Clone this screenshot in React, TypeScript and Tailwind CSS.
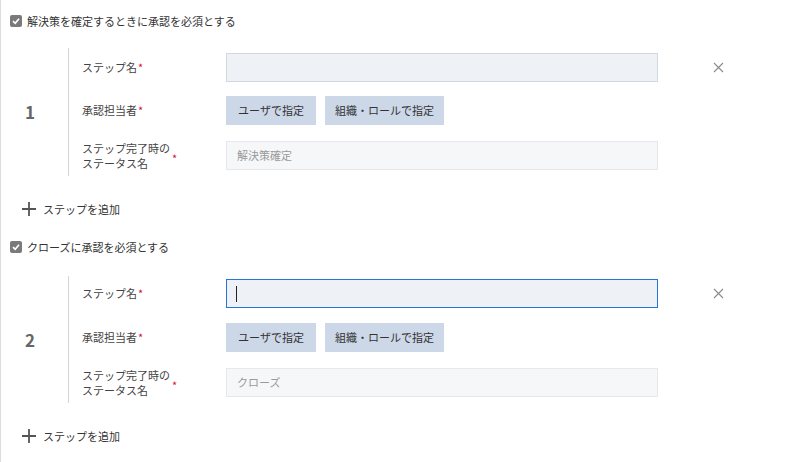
import React from "react";

interface StepProps {
  num: string;
  statusName: string;
  focused?: boolean;
  pt: string;
  gapA: string;
}

function CheckRow({ label, className }: { label: string; className: string }) {
  return (
    <div className={`flex items-center h-[16px] pl-[9px] ${className}`}>
      <span className="flex items-center justify-center w-[12px] h-[12px] rounded-[2px] bg-[#7a7a7a]">
        <svg width="10" height="10" viewBox="0 0 10 10">
          <path d="M2 5.2 L4.2 7.3 L8 2.8" stroke="#fff" strokeWidth="1.7" fill="none" />
        </svg>
      </span>
      <span className="ml-[5px] text-[11px] text-[#333]">{label}</span>
    </div>
  );
}

function AddStep({ className }: { className: string }) {
  return (
    <div className={`flex items-center h-[20px] pl-[20px] ${className}`}>
      <svg width="16" height="16" viewBox="0 0 16 16">
        <path d="M8 1 V15 M1 8 H15" stroke="#555" strokeWidth="1.8" />
      </svg>
      <span className="ml-[6px] text-[11px] text-[#333]">ステップを追加</span>
    </div>
  );
}

function Req() {
  return <span className="text-[#d0103a] ml-[1px]">*</span>;
}

function Step({ num, statusName, focused, pt, gapA }: StepProps) {
  return (
    <div className="flex">
      <div className="w-[67px] flex items-center pl-[24px]">
        <span className="text-[17px] font-bold text-[#666]">{num}</span>
      </div>
      <div className={`border-l border-[#d4d4d8] pl-[13px] flex flex-col ${pt} pb-[6px]`}>
        <div className="flex items-center h-[29px]">
          <div className="w-[144px] text-[11px] text-[#444]">
            ステップ名<Req />
          </div>
          <div
            className={
              focused
                ? "w-[432px] h-[29px] bg-[#eef2f7] border border-[#2574dc] flex items-center pl-[9px]"
                : "w-[432px] h-[29px] bg-[#eef2f7] border border-[#d3d8de]"
            }
          >
            {focused && <span className="w-[1px] h-[16px] bg-[#222]" />}
          </div>
          <svg className="ml-[55px]" width="11" height="11" viewBox="0 0 11 11">
            <path d="M1 1 L10 10 M10 1 L1 10" stroke="#8a8a8a" strokeWidth="1.1" />
          </svg>
        </div>
        <div className={`flex items-center h-[29px] ${gapA}`}>
          <div className="w-[144px] text-[11px] text-[#444]">
            承認担当者<Req />
          </div>
          <div className="flex gap-[9px]">
            <div className="w-[90px] h-[29px] bg-[#ccd7e8] flex items-center justify-center text-[11px] text-[#333]">
              ユーザで指定
            </div>
            <div className="w-[119px] h-[29px] bg-[#ccd7e8] flex items-center justify-center text-[11px] text-[#333]">
              組織・ロールで指定
            </div>
          </div>
        </div>
        <div className="flex items-center h-[29px] mt-[16px]">
          <div className="w-[144px] flex items-center text-[11px] text-[#444]">
            <div className="flex flex-col">
              <span className="leading-[15px]">ステップ完了時の</span>
              <span className="leading-[15px]">ステータス名</span>
            </div>
            <span className="text-[#d0103a] ml-[2px] mt-[6px]">*</span>
          </div>
          <div className="w-[432px] h-[29px] bg-[#f5f7f9] border border-[#e5e8ec] flex items-center pl-[10px] text-[11px] text-[#9a9a9a]">
            {statusName}
          </div>
        </div>
      </div>
    </div>
  );
}

export default function App() {
  return (
    <div
      className="w-[798px] h-[462px] bg-white border-l border-[#dcdce4] overflow-hidden"
      style={{ fontFamily: '"Noto Sans CJK JP", "Noto Sans", sans-serif' }}
    >
      <CheckRow label="解決策を確定するときに承認を必須とする" className="mt-[13px]" />
      <div className="mt-[19px]">
        <Step num="1" statusName="解決策確定" pt="pt-[5px]" gapA="mt-[14px]" />
      </div>
      <AddStep className="mt-[23px]" />
      <CheckRow label="クローズに承認を必須とする" className="mt-[20px]" />
      <div className="mt-[21px]">
        <Step num="2" statusName="クローズ" focused pt="pt-[3px]" gapA="mt-[15px]" />
      </div>
      <AddStep className="mt-[23px]" />
    </div>
  );
}
